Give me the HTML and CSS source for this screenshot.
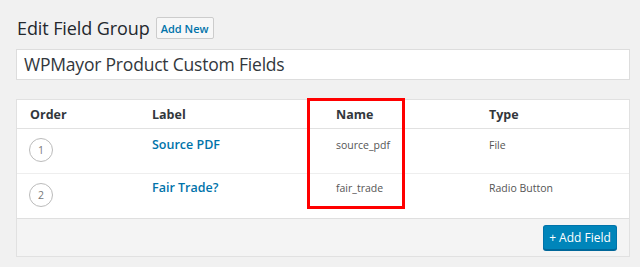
FILE: index.html
```html
<!DOCTYPE html>
<html>
<head>
<meta charset="utf-8">
<link rel="stylesheet" href="styles.css">
</head>
<body>
<div class="wrap">
  <div class="head">
    <h1 class="title">Edit Field Group</h1>
    <span class="btn-sec">Add New</span>
  </div>
  <div class="titlebox">WPMayor Product Custom Fields</div>
  <div class="fields">
    <div class="row hdr">
      <div>Order</div><div>Label</div><div>Name</div><div>Type</div>
    </div>
    <div class="row r1">
      <div><span class="ord">1</span></div>
      <div class="lbl">Source PDF</div>
      <div class="val">source_pdf</div>
      <div class="val">File</div>
    </div>
    <div class="row r2">
      <div><span class="ord">2</span></div>
      <div class="lbl">Fair Trade?</div>
      <div class="val">fair_trade</div>
      <div class="val">Radio Button</div>
    </div>
    <div class="foot"><span class="btn-pri">+ Add Field</span></div>
    <div class="redbox"></div>
  </div>
</div>
</body>
</html>
```
FILE: styles.css
```css
html, body { margin: 0; padding: 0; }
body {
  background: #f1f1f1;
  font-family: "Open Sans", "Noto Sans", sans-serif;
  color: #444;
  width: 640px;
  height: 267px;
  overflow: hidden;
}
.wrap { padding: 17px 10px 0 16px; }
.head { display: flex; align-items: center; gap: 6px; height: 22px; }
.title {
  margin: 0 0 0 1px;
  font-size: 18px;
  font-weight: 400;
  color: #23282d;
  line-height: 22px;
  letter-spacing: -0.1px;
  white-space: nowrap;
}
.btn-sec {
  box-sizing: border-box;
  height: 22px;
  width: 58px;
  border: 1px solid #ccc;
  background: #f7f7f7;
  color: #0073aa;
  font-size: 11px;
  font-weight: 600;
  display: flex;
  align-items: center;
  justify-content: center;
  border-radius: 2px;
}
.titlebox {
  margin-top: 10px;
  box-sizing: border-box;
  height: 31px;
  border: 1px solid #ddd;
  background: #fff;
  font-size: 17.5px;
  color: #32373c;
  padding-left: 7px;
  line-height: 28px;
  letter-spacing: -0.2px;
}
.fields {
  position: relative;
  margin-top: 19px;
  border: 1px solid #e1e1e1;
  background: #fff;
}
.row {
  display: grid;
  grid-template-columns: 122px 184px 153px 1fr;
  padding-left: 13px;
  border-bottom: 1px solid #eee;
  align-items: start;
}
.hdr {
  height: 28px;
  align-items: center;
  font-size: 12.5px;
  font-weight: 700;
  color: #32373c;
  border-bottom: 1px solid #e1e1e1;
}
.r1 { height: 44px; }
.r2 { height: 44px; border-bottom: 1px solid #dfdfdf; }
.lbl {
  color: #0073aa;
  font-size: 12.5px;
  font-weight: 600;
  padding-top: 7px;
  line-height: 17px;
}
.val {
  color: #555;
  font-size: 10.5px;
  padding-top: 8px;
  line-height: 16px;
}
.ord {
  box-sizing: border-box;
  display: flex;
  align-items: center;
  justify-content: center;
  width: 24px;
  height: 24px;
  border: 1px solid #bbb;
  border-radius: 50%;
  font-size: 10.5px;
  color: #777;
  margin-top: 9px;
  margin-left: -1px;
}
.r2 .lbl { padding-top: 5px; }
.r2 .val { padding-top: 6px; }
.foot {
  background: #f4f4f4;
  height: 37px;
  display: flex;
  justify-content: flex-end;
  align-items: center;
  padding-right: 12px;
}
.btn-pri {
  box-sizing: border-box;
  height: 25px;
  width: 74px;
  background: #0085ba;
  border: 1px solid #0073aa;
  border-bottom-color: #006799;
  border-radius: 3px;
  color: #fff;
  font-size: 12px;
  display: flex;
  align-items: center;
  justify-content: center;
  box-shadow: 0 1px 0 #006799;
}
.redbox {
  position: absolute;
  left: 290px;
  top: -2px;
  width: 98px;
  height: 111px;
  box-sizing: border-box;
  border: 3px solid #ff0000;
}
```
